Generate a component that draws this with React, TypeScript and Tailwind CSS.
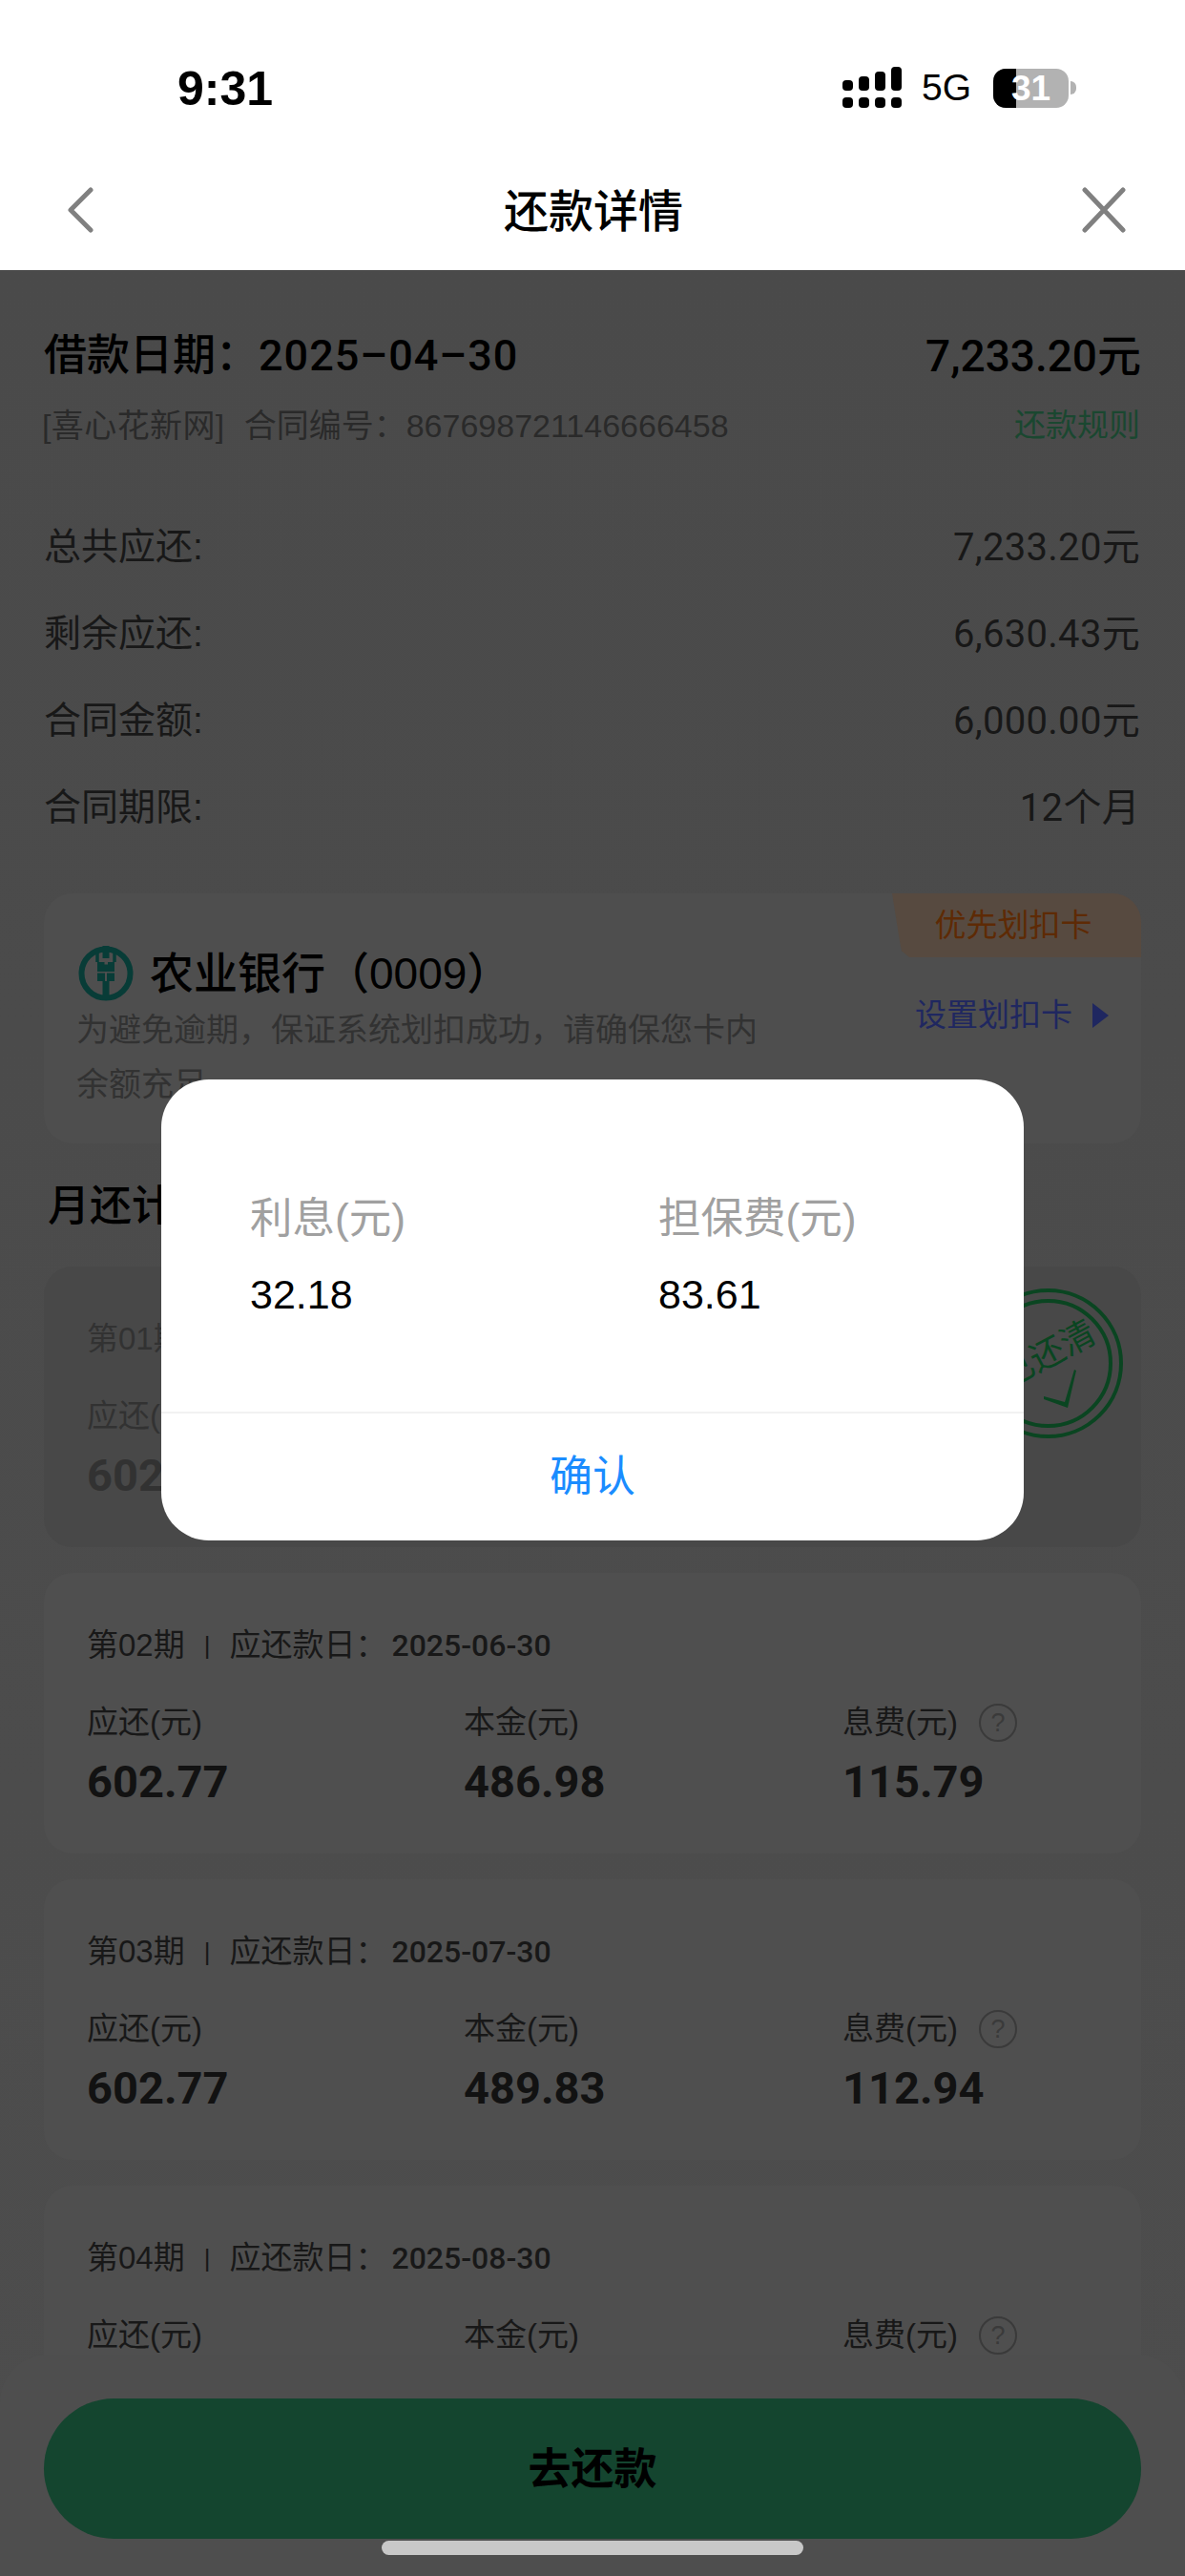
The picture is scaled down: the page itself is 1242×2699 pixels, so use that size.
const plans = [
  { no: "01", date: "2025-05-30", total: "602.77", principal: "", fee: "", paid: true },
  { no: "02", date: "2025-06-30", total: "602.77", principal: "486.98", fee: "115.79", paid: false },
  { no: "03", date: "2025-07-30", total: "602.77", principal: "489.83", fee: "112.94", paid: false },
  { no: "04", date: "2025-08-30", total: "602.77", principal: "492.70", fee: "110.07", paid: false },
];

const summary = [
  { label: "总共应还:", value: "7,233.20元" },
  { label: "剩余应还:", value: "6,630.43元" },
  { label: "合同金额:", value: "6,000.00元" },
  { label: "合同期限:", value: "12个月" },
];

function SignalIcon() {
  return (
    <svg width="62" height="44" viewBox="0 0 62 44" fill="#000">
      <rect x="0" y="14" width="11" height="11" rx="4" />
      <rect x="17" y="10" width="11" height="15" rx="4" />
      <rect x="34" y="5" width="11" height="20" rx="4" />
      <rect x="51" y="0" width="11" height="25" rx="4" />
      <rect x="0" y="32" width="11" height="11" rx="4" />
      <rect x="17" y="32" width="11" height="11" rx="4" />
      <rect x="34" y="32" width="11" height="11" rx="4" />
      <rect x="51" y="32" width="11" height="11" rx="4" />
    </svg>
  );
}

function BankLogo() {
  return (
    <svg width="58" height="58" viewBox="0 0 58 58" className="shrink-0">
      <circle cx="29" cy="29" r="25.5" fill="none" stroke="#083c37" strokeWidth="6" />
      <rect x="25.5" y="0" width="7" height="13" fill="#083c37" />
      <rect x="25.5" y="37" width="7" height="20" fill="#083c37" />
      <path d="M20 6v11M38 6v11" stroke="#083c37" strokeWidth="3.5" />
      <path d="M20 17h7.5v2.5H31V17h7v10H20zM20 28.5h8v8.5h-8zM30 28.5h8v8.5h-8z" fill="#083c37" />
    </svg>
  );
}

function PaidStamp() {
  return (
    <div className="absolute left-[974px] top-[23px] h-[157px] w-[157px] rounded-full border-[4px] border-[#0a4521] p-[7px]">
      <div className="flex h-full w-full flex-col items-center rounded-full border-[4px] border-[#0a4521] pt-[32px]">
        <div className="-rotate-[28deg] whitespace-nowrap text-[36px] leading-[44px] text-[#0a4521]">已还清</div>
        <svg width="36" height="40" viewBox="0 0 36 40" className="ml-[26px] mt-[-6px]" fill="#0a4521">
          <path d="M0 28l22 6 10-34 2 1-9 39-25-9z" />
        </svg>
      </div>
    </div>
  );
}

function PlanCard({ plan }: { plan: (typeof plans)[number] }) {
  const text = plan.paid ? "text-[#323232]" : "text-[#181818]";
  const strong = plan.paid ? "text-[#323232]" : "text-[#121212]";
  return (
    <div className={`relative h-[294px] shrink-0 rounded-[30px] pl-[45px] pt-[51px] ${plan.paid ? "bg-[#484848]" : "bg-[#4f4f4f]"}`}>
      <div className={`flex h-[50px] items-center text-[33px] ${text}`}>
        <span>第{plan.no}期</span>
        <span className="mx-[20px] text-[26px]">|</span>
        <span>应还款日：</span>
        <span className="ml-[5px] font-['Roboto',sans-serif] text-[32px] font-medium">{plan.date}</span>
      </div>
      <div className={`mt-[31px] grid grid-cols-[395px_397px_1fr] text-[33px] leading-[50px] ${text}`}>
        <span>应还(元)</span>
        {!plan.paid && <span>本金(元)</span>}
        {!plan.paid && (
          <span className="flex items-center gap-[22px]">
            息费(元)
            <span className="flex h-[40px] w-[40px] items-center justify-center rounded-full border-2 border-[#3a3a3a] text-[27px] leading-none text-[#3a3a3a]">?</span>
          </span>
        )}
      </div>
      <div className={`mt-[7px] grid grid-cols-[395px_397px_1fr] font-['Roboto',sans-serif] text-[47px] font-bold leading-[60px] ${strong}`}>
        <span>{plan.total}</span>
        <span>{plan.principal}</span>
        <span>{plan.fee}</span>
      </div>
      {plan.paid && <PaidStamp />}
    </div>
  );
}

export default function App() {
  return (
    <div className="relative flex h-[2699px] w-[1242px] flex-col overflow-hidden bg-white font-['Liberation_Sans','Noto_Sans_CJK_SC',sans-serif] text-black">
      {/* 状态栏 */}
      <div className="flex h-[166px] shrink-0 items-start pl-[186px] pr-[114px] pt-[63px]">
        <span className="text-[50px] font-bold leading-[60px]">9:31</span>
        <div className="ml-auto mt-[7px] flex items-center">
          <SignalIcon />
          <span className="ml-[21px] text-[39px] leading-[44px]">5G</span>
          <div className="relative ml-[23px] flex h-[41px] w-[79px] overflow-hidden rounded-[13px] bg-[#b2b2b2]">
            <div className="h-full w-[24px] bg-black" />
            <span className="absolute left-[19px] top-0 text-[37px] font-bold leading-[41px] text-white">31</span>
          </div>
          <div className="ml-[2px] h-[14px] w-[6px] rounded-r-full bg-[#b2b2b2]" />
        </div>
      </div>

      {/* 导航 */}
      <div className="grid h-[117px] shrink-0 grid-cols-[1fr_auto_1fr] items-center pb-[10px] pl-[70px] pr-[62px]">
        <svg width="28" height="48" viewBox="0 0 28 48" fill="none" stroke="#808080" strokeWidth="5" strokeLinecap="round" strokeLinejoin="round">
          <path d="M25 3L4 24l21 21" />
        </svg>
        <span className="-ml-[6px] mt-[4px] text-[47px] font-medium leading-[60px]">还款详情</span>
        <svg width="46" height="48" viewBox="0 0 46 48" fill="none" stroke="#808080" strokeWidth="5" strokeLinecap="round" className="justify-self-end">
          <path d="M3 3l40 42M43 3L3 45" />
        </svg>
      </div>

      {/* 页面内容 */}
      <div className="flex flex-1 flex-col overflow-hidden bg-gradient-to-b from-[#4a4a4a] to-[#4d4d4d] px-[46px] pt-[60px]">
        <div className="flex h-[60px] shrink-0 items-center justify-between text-[45px] font-medium">
          <span>
            借款日期：<span className="font-['Roboto',sans-serif] tracking-[1px]">2025–04–30</span>
          </span>
          <span className="font-['Roboto','Noto_Sans_CJK_SC',sans-serif] text-[46px]">7,233.20元</span>
        </div>
        <div className="mt-[13px] flex h-[60px] shrink-0 items-center justify-between text-[34px] text-[#2a2a2a]">
          <span className="-ml-[2px] flex">
            <span className="tracking-[0.4px]">[喜心花新网]</span>
            <span className="ml-[20px]">合同编号：867698721146666458</span>
          </span>
          <span className="pr-[1px] text-[33px] text-[#1a4730]">还款规则</span>
        </div>

        <div className="mt-[52px] flex shrink-0 flex-col">
          {summary.map((row) => (
            <div key={row.label} className="flex h-[91px] items-center justify-between text-[39px] text-[#181818]">
              <span>{row.label}</span>
              <span className="pr-[1px] font-['Roboto','Noto_Sans_CJK_SC',sans-serif] text-[40px] tracking-[0.3px]">{row.value}</span>
            </div>
          ))}
        </div>

        {/* 银行卡 */}
        <div className="relative mt-[44px] h-[262px] shrink-0 rounded-[30px] bg-[#4e4e4e] pl-[36px] pt-[55px]">
          <div className="absolute right-0 top-0 flex h-[67px] w-[261px] items-center justify-center rounded-tr-[30px] bg-[#574a40] pr-[7px] text-[33px] text-[#5e2a05] [clip-path:polygon(0_0,100%_0,100%_100%,18px_100%,10px_90%,8px_75%)]">
            优先划扣卡
          </div>
          <div className="flex h-[58px] items-center gap-[17px]">
            <BankLogo />
            <span className="text-[46px] font-medium leading-[58px]">农业银行（0009）</span>
          </div>
          <div className="flex">
            <p className="-ml-[2px] mt-[2px] w-[730px] text-[34px] leading-[57px] text-[#323232]">
              为避免逾期，保证系统划扣成功，请确保您卡内余额充足
            </p>
            <div className="ml-[149px] mt-[-10px] flex h-[50px] items-center gap-[20px] text-[33px] text-[#1f2760]">
              <span>设置划扣卡</span>
              <svg width="18" height="26" viewBox="0 0 18 26" fill="#1f2760">
                <path d="M1 0l17 13L1 26z" />
              </svg>
            </div>
          </div>
        </div>

        <div className="mb-[33px] mt-[36px] flex h-[60px] shrink-0 items-center pl-[4px] text-[44px] font-medium">月还计划</div>

        {/* 月还计划 */}
        <div className="flex flex-col gap-[27px]">
          {plans.map((plan) => (
            <PlanCard key={plan.no} plan={plan} />
          ))}
        </div>
      </div>

      {/* 底部按钮 */}
      <div className="absolute bottom-0 left-0 right-0 h-[232px] rounded-t-[50px] bg-[#4e4e4e] px-[46px] pt-[46px]">
        <div className="flex h-[147px] items-center justify-center rounded-full bg-[#14452f] pt-[2px] text-[45px] font-bold">去还款</div>
      </div>
      <div className="absolute left-[400px] top-[2662px] h-[15px] w-[442px] rounded-full bg-[#c8c8c8]" />

      {/* 弹窗 */}
      <div className="absolute left-[169px] top-[1131px] flex h-[483px] w-[904px] flex-col rounded-[50px] bg-white">
        <div className="grid flex-1 grid-cols-[428px_1fr] content-start pl-[93px] pt-[116px]">
          <span className="text-[44.5px] leading-[60px] text-[#a0a0a0]">利息(元)</span>
          <span className="text-[44.5px] leading-[60px] text-[#a0a0a0]">担保费(元)</span>
          <span className="mt-[19px] text-[43px] leading-[60px]">32.18</span>
          <span className="mt-[19px] text-[43px] leading-[60px]">83.61</span>
        </div>
        <div className="flex h-[135px] items-center justify-center border-t-2 border-[#f2f2f2] text-[45px] text-[#1a8cff]">确认</div>
      </div>
    </div>
  );
}
